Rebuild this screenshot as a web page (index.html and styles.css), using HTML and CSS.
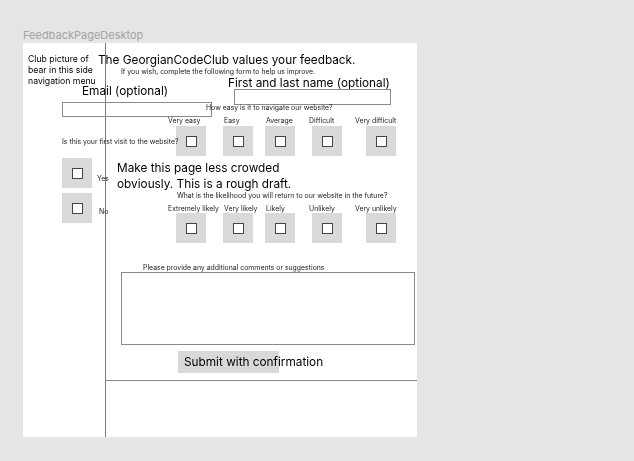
FILE: index.html
```html
<!DOCTYPE html>
<html>
<head>
<meta charset="utf-8">
<link rel="stylesheet" href="styles.css">
</head>
<body>
<div class="canvas">
  <div class="frame-title">FeedbackPageDesktop</div>
  <div class="frame">
    <div class="vline"></div>
    <div class="hline"></div>
    <div class="t club">Club picture of<br>bear in this side<br>navigation menu</div>
    <div class="t big headline">The GeorgianCodeClub values your feedback.</div>
    <div class="t small subtitle">If you wish, complete the following form to help us improve.</div>
    <div class="t big email-label">Email (optional)</div>
    <div class="t big name-label">First and last name (optional)</div>
    <div class="input name-input"></div>
    <div class="input email-input"></div>
    <div class="t small q1">How easy is it to navigate our website?</div>

    <div class="t small lbl" style="left:145px;top:74px">Very easy</div>
    <div class="t small lbl" style="left:201px;top:74px">Easy</div>
    <div class="t small lbl" style="left:243px;top:74px">Average</div>
    <div class="t small lbl" style="left:286px;top:74px">Difficult</div>
    <div class="t small lbl" style="left:332px;top:74px">Very difficult</div>

    <div class="box" style="left:153px;top:83px"><span class="cb"></span></div>
    <div class="box" style="left:200px;top:83px"><span class="cb"></span></div>
    <div class="box" style="left:242px;top:83px"><span class="cb"></span></div>
    <div class="box" style="left:289px;top:83px"><span class="cb"></span></div>
    <div class="box" style="left:343px;top:83px"><span class="cb"></span></div>

    <div class="t small first-visit">Is this your first visit to the website?</div>
    <div class="box" style="left:39px;top:115px"><span class="cb"></span></div>
    <div class="box" style="left:39px;top:150px"><span class="cb"></span></div>
    <div class="t small yes">Yes</div>
    <div class="t small no">No</div>

    <div class="t big note">Make this page less crowded<br>obviously. This is a rough draft.</div>
    <div class="t small q2">What is the likelihood you will return to our website in the future?</div>

    <div class="t small lbl" style="left:145px;top:162px">Extremely likely</div>
    <div class="t small lbl" style="left:201px;top:162px">Very likely</div>
    <div class="t small lbl" style="left:243px;top:162px">Likely</div>
    <div class="t small lbl" style="left:286px;top:162px">Unlikely</div>
    <div class="t small lbl" style="left:332px;top:162px">Very unlikely</div>

    <div class="box" style="left:153px;top:170px"><span class="cb"></span></div>
    <div class="box" style="left:200px;top:170px"><span class="cb"></span></div>
    <div class="box" style="left:242px;top:170px"><span class="cb"></span></div>
    <div class="box" style="left:289px;top:170px"><span class="cb"></span></div>
    <div class="box" style="left:343px;top:170px"><span class="cb"></span></div>

    <div class="t small comments-label">Please provide any additional comments or suggestions</div>
    <div class="input comments"></div>

    <div class="submit-bg"></div>
    <div class="t big submit">Submit with confirmation</div>
  </div>
</div>
</body>
</html>
```

FILE: styles.css
```css
html, body {
  margin: 0;
  padding: 0;
  background: #e5e5e5;
  font-family: Inter, "Noto Sans", sans-serif;
  color: #000;
}
.canvas {
  position: relative;
  width: 634px;
  height: 461px;
}
.frame-title {
  position: absolute;
  left: 23px;
  top: 28px;
  font-size: 11px;
  line-height: 14px;
  color: #a3a3a3;
}
.frame {
  position: absolute;
  left: 23px;
  top: 43px;
  width: 394px;
  height: 394px;
  background: #fff;
  overflow: hidden;
  will-change: transform;
}
.vline {
  position: absolute;
  left: 82px;
  top: 0;
  width: 1px;
  height: 394px;
  background: #7a7a7a;
}
.hline {
  position: absolute;
  left: 82px;
  top: 337px;
  width: 312px;
  height: 1px;
  background: #8a8a8a;
}
.t {
  position: absolute;
  white-space: nowrap;
}
.big {
  font-size: 11.8px;
  line-height: 15px;
}
.small {
  font-size: 6.9px;
  line-height: 8px;
  color: #222;
}
.club {
  left: 5px;
  top: 11px;
  font-size: 8.7px;
  line-height: 11px;
}
.headline { left: 75px; top: 10px; }
.subtitle { left: 98px; top: 25px; }
.email-label { left: 59px; top: 41px; }
.name-label { left: 205px; top: 33px; }
.input {
  position: absolute;
  border: 1px solid #8a8a8a;
  background: transparent;
  box-sizing: border-box;
}
.name-input { left: 211px; top: 46px; width: 157px; height: 16px; }
.email-input { left: 39px; top: 59px; width: 150px; height: 15px; }
.q1 { left: 183px; top: 61px; }
.box {
  position: absolute;
  width: 30px;
  height: 30px;
  background: #d9d9d9;
  display: flex;
  align-items: center;
  justify-content: center;
}
.cb {
  width: 11px;
  height: 11px;
  box-sizing: border-box;
  background: #fff;
  border: 1px solid #444;
}
.first-visit { left: 39px; top: 95px; }
.yes { left: 74px; top: 132px; }
.no { left: 76px; top: 165px; }
.note { left: 94px; top: 117px; line-height: 16px; }
.q2 { left: 154px; top: 149px; }
.comments-label { left: 120px; top: 221px; }
.comments { left: 98px; top: 229px; width: 294px; height: 73px; }
.submit-bg {
  position: absolute;
  left: 155px;
  top: 308px;
  width: 101px;
  height: 22px;
  background: #d9d9d9;
}
.submit { left: 161px; top: 312px; }
```
